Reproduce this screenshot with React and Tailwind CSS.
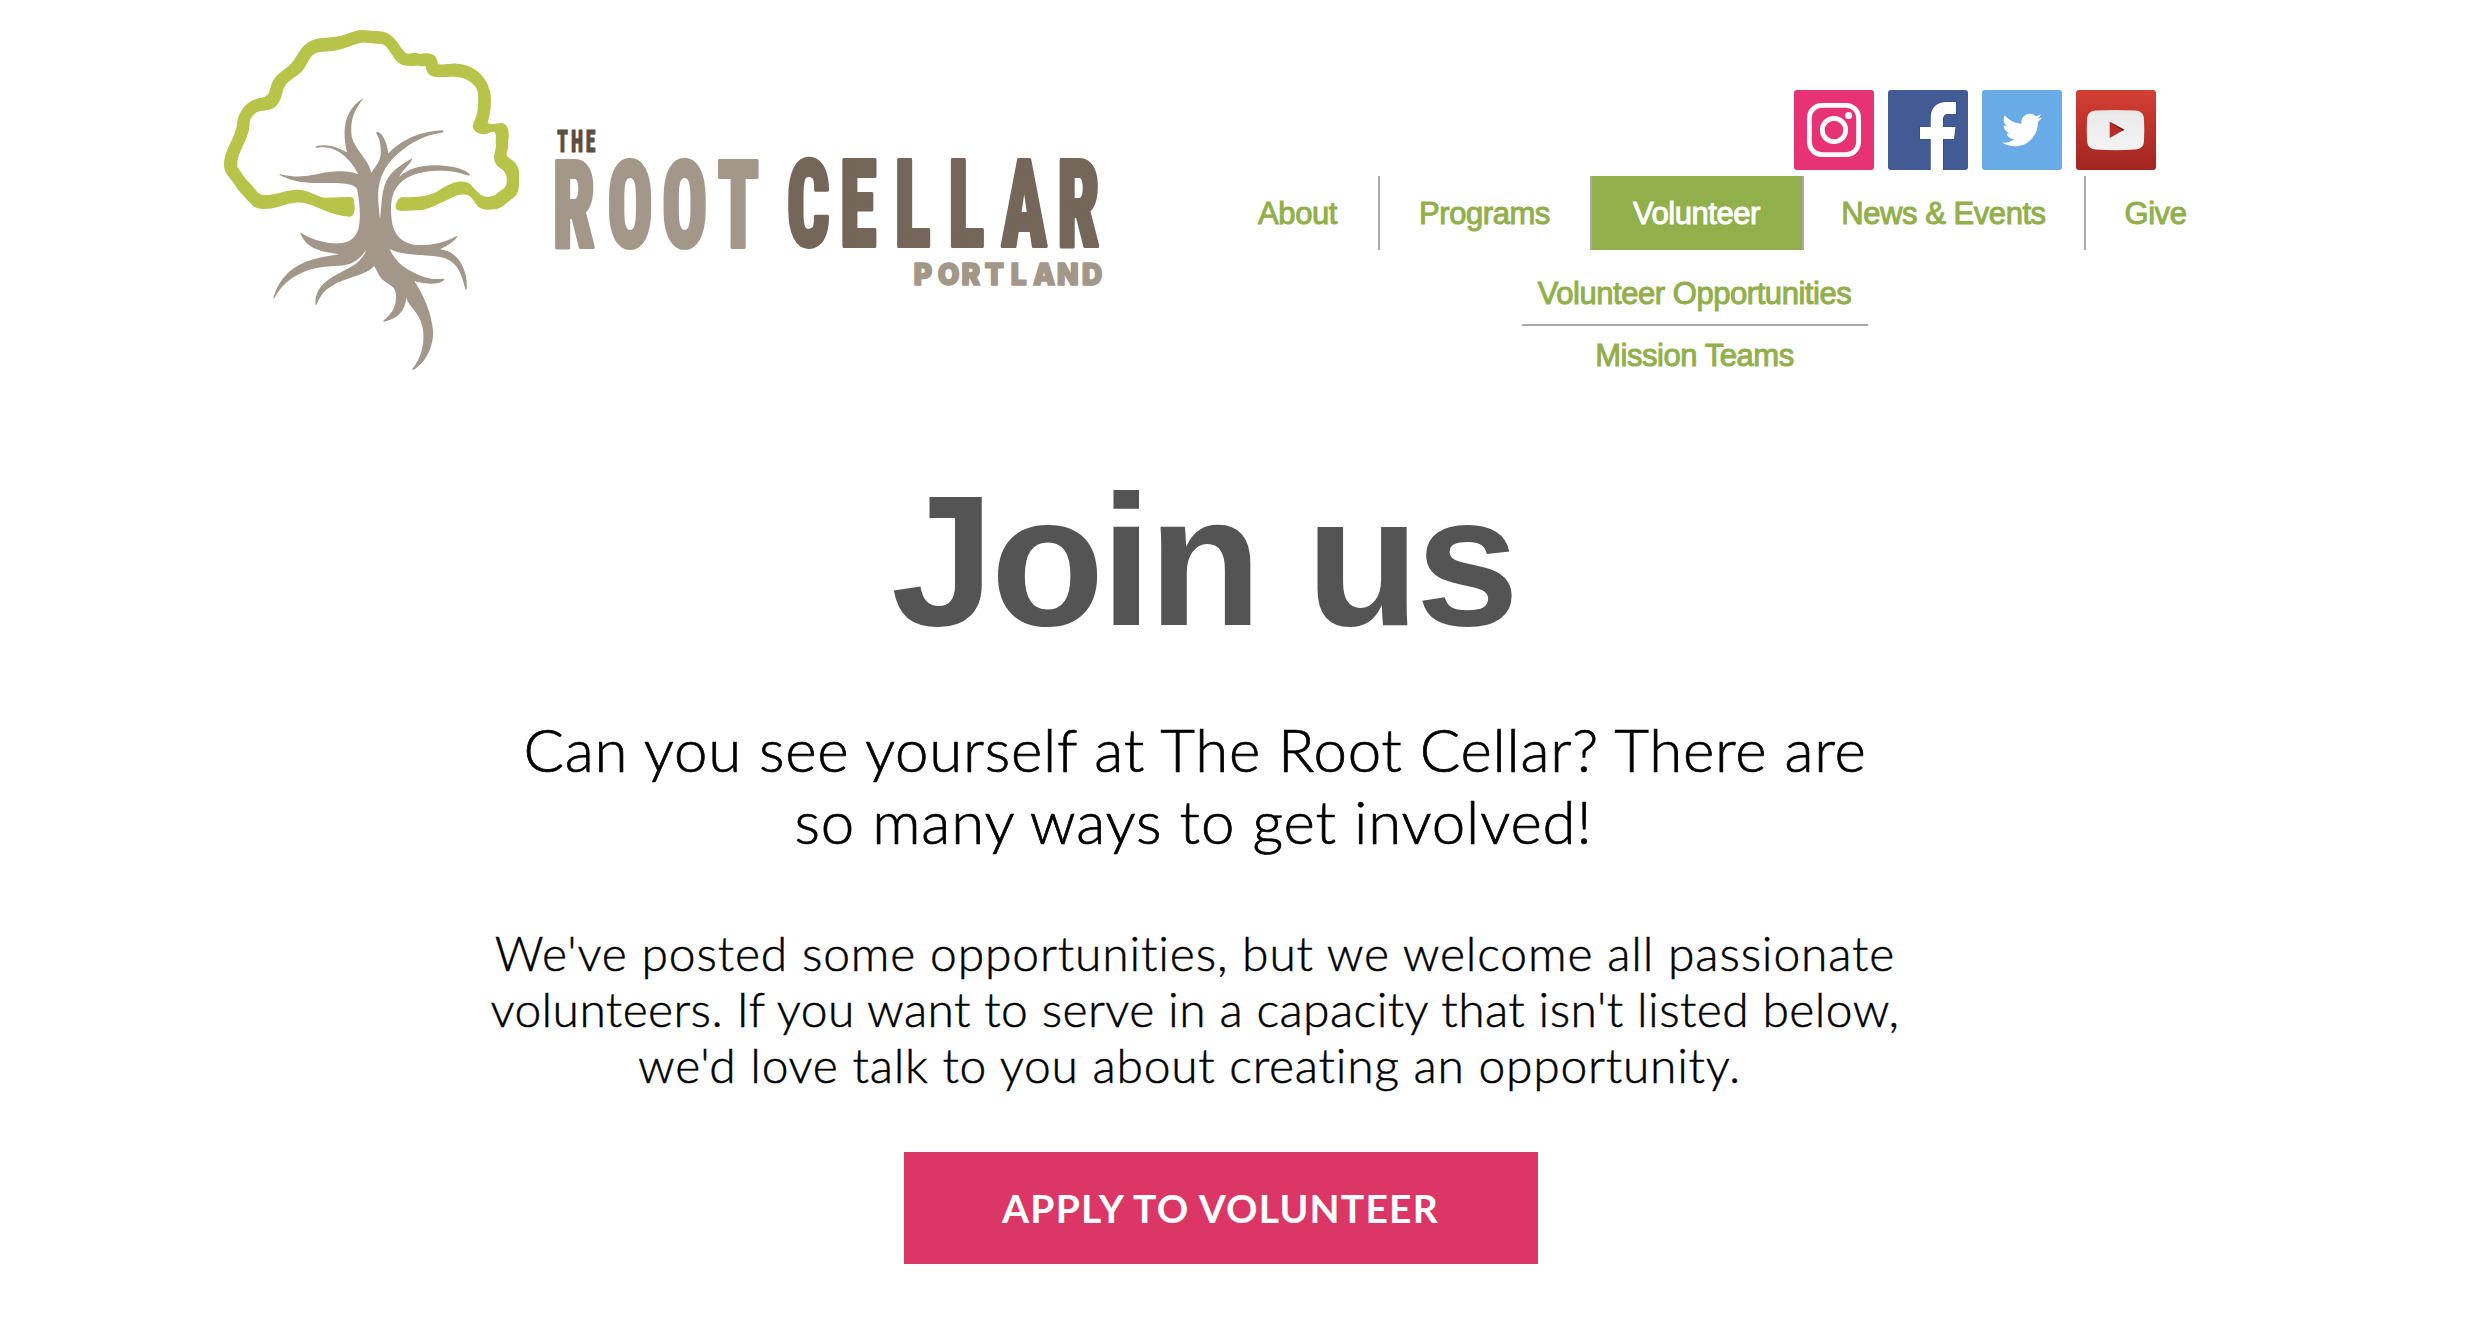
import { FaTwitter } from "react-icons/fa";

function Logo() {
  return (
    <svg
      width="900"
      height="360"
      viewBox="0 0 900 360"
      className="shrink-0"
      role="img"
      aria-label="The Root Cellar Portland"
    >
      <g transform="scale(0.33333)">
        <path
          fill="#b7c349"
          d="M418 590C385 588 350 575 320 562C300 552 275 546 255 548C225 550 200 567 160 567C140 567 130 560 122 550C100 528 85 512 75 495C60 472 42 460 42 435C42 400 60 375 73 343C85 315 78 300 90 280C103 255 120 240 150 234C165 231 173 227 178 215C183 200 185 182 200 167C215 152 235 142 248 125C262 107 273 80 293 68C320 50 350 56 390 48C415 42 430 32 455 30C470 30 480 33 495 33C530 32 545 45 562 67C572 80 580 97 592 101C605 102 610 97 622 100C632 104 640 99 652 100C675 101 682 115 684 133C705 135 720 130 740 131C790 134 830 165 841 218C846 255 840 280 833 309C848 315 862 309 876 309C892 312 897 330 896 348C896 365 893 368 894 382C894 395 888 400 890 406C895 415 910 420 918 432C928 445 928 455 927 475C927 495 927 510 921 522C912 535 900 540 885 553C872 567 855 569 835 569C815 569 805 562 797 551C787 535 780 525 768 524C740 520 725 535 700 545C670 558 650 571 620 571L575 573C560 573 555 565 557 555C562 540 568 532 578 531C605 533 640 530 665 522C690 512 715 488 745 485C765 483 780 488 788 500C800 512 810 529 830 530C850 532 855 525 865 517C880 507 890 500 890 485C892 470 887 455 875 447C863 440 852 430 852 410C854 395 858 390 858 375C855 360 862 345 853 336C843 333 835 343 820 343C805 341 788 333 788 318C792 305 800 290 803 270C805 240 808 215 795 199C780 180 760 171 730 170C710 170 700 172 678 171C660 170 648 158 647 138C635 141 625 135 618 137C605 139 590 138 578 135C560 128 550 110 540 95C530 80 525 71 505 71C490 72 470 67 455 68C430 72 410 84 385 90C360 95 340 93 318 99C300 107 295 125 283 145C270 165 245 175 228 193C215 210 218 235 202 254C185 275 160 268 142 276C130 282 120 295 119 310C118 335 112 348 103 368C93 392 80 410 82 440C95 460 105 475 120 490C135 505 142 523 160 525C195 527 225 510 262 509C290 508 320 528 342 533L420 531C432 531 432 540 432 548C436 560 436 590 418 590Z"
        />
        <path
          fill="#a3978a"
          d="M461 233C430 275 420 300 425 350C435 390 475 415 484 459C500 432 515 425 512 385C512 365 505 350 498 338C505 333 512 340 518 348C528 363 532 380 535 400C575 360 625 335 698 331C702 334 700 337 695 338C640 345 600 370 565 400C530 430 500 475 505 545C507 570 508 585 510 597C515 560 513 520 528 485C545 450 575 435 606 415C608 418 600 430 590 440C580 452 572 460 567 471C600 440 650 432 700 437C735 440 765 448 780 463C779 468 775 467 765 464C735 452 680 449 640 457C600 465 570 480 552 515C540 545 542 580 546 605C552 650 585 672 620 675C670 677 700 668 742 647C745 655 715 677 690 688C740 692 775 745 770 808C767 809 766 808 765 804C755 760 740 720 690 711C650 703 580 708 539 687C560 735 600 755 640 770C660 778 680 778 703 776C705 780 695 787 680 790C660 793 640 790 613 783C640 825 665 875 670 940C668 985 645 1030 612 1049C607 1050 606 1049 608 1046C635 1010 642 975 640 940C638 900 620 880 600 855C595 848 590 840 589 832C585 875 565 895 522 905C518 905 519 903 523 899C545 880 558 862 558 830C558 800 545 800 530 788C508 775 505 760 493 738C470 765 410 772 370 795C340 812 330 830 319 855C316 855 315 852 316 848C318 800 350 780 390 758C430 738 455 725 469 690C450 715 430 735 390 737C340 740 300 740 250 772C215 797 205 815 193 835C190 836 189 834 191 830C210 770 250 735 310 718C340 709 365 707 387 703C340 695 290 690 271 639C274 636 276 640 280 643C310 660 350 672 390 670C430 667 448 640 449 600C451 570 447 540 442 510C435 485 375 490 310 489C270 488 240 480 208 465C208 461 212 462 216 464C270 475 300 467 350 457C390 452 415 452 444 462C430 430 390 382 340 382C330 381 322 385 317 383C317 378 330 376 345 376C370 377 390 387 411 397C395 330 402 270 461 233Z"
        />
      </g>
      <g className="font-['Roboto_Condensed',sans-serif] font-black" strokeLinejoin="round">
        <text
          transform="translate(0 131.5) scale(0.64 1)"
          x="542 564 587"
          fontSize="31"
          fill="#5d4e42"
          stroke="#5d4e42"
          strokeWidth="0.8"
        >
          THE
        </text>
        <text
          transform="translate(0 226.8) scale(0.62 1)"
          x="552.7 641 729 818.5"
          fontSize="121"
          fill="#a3978a"
          stroke="#a3978a"
          strokeWidth="4"
        >
          ROOT
        </text>
        <text
          transform="translate(0 226.2) scale(0.62 1)"
          x="930.4 1016.2 1104.5 1191 1276.8 1366.5"
          fontSize="121"
          fill="#746659"
          stroke="#746659"
          strokeWidth="4"
        >
          CELLAR
        </text>
      </g>
      <text
        transform="translate(0 265.2) scale(0.95 1)"
        x="740.8 766 791.1 815.6 842.9 866.2 891.5 917.8"
        fontSize="29.500"
        fill="#a3978a"
        stroke="#a3978a"
        strokeWidth="1.6"
        strokeLinejoin="round"
        className="font-['Inter',sans-serif] font-black"
      >
        PORTLAND
      </text>
    </svg>
  );
}

function Instagram() {
  return (
    <svg viewBox="0 0 80 80" className="size-20 rounded-[3px] bg-[#e73375]" aria-label="Instagram">
      <rect x="15.4" y="15.4" width="49.2" height="49.2" rx="12.5" fill="none" stroke="#fff" strokeWidth="4.8" />
      <circle cx="40" cy="40" r="11.7" fill="none" stroke="#fff" strokeWidth="4.8" />
      <circle cx="54.6" cy="25.6" r="3.5" fill="#fff" />
    </svg>
  );
}

function Facebook() {
  return (
    <svg viewBox="0 0 80 80" className="size-20 rounded-[3px] bg-[#435b95]" aria-label="Facebook">
      <path
        d="M42.7 80V49H32V37h10.7V27C42.7 17.500 49 12 58.500 12H68v12h-7c-4.500 0-6 2-6 5.500V37h12.500L66 49H55v31z"
        fill="#fff"
        stroke="#2c478a"
        strokeWidth="1.200"
        paintOrder="stroke"
      />
    </svg>
  );
}

function Twitter() {
  return (
    <div className="flex size-20 items-center justify-center rounded-[3px] bg-[#69abe7]">
      <FaTwitter className="size-10 text-white" aria-label="Twitter" />
    </div>
  );
}

function YouTube() {
  return (
    <svg viewBox="0 0 80 80" className="size-20 rounded-[3px] bg-linear-to-b from-[#d43f33] to-[#a22421]" aria-label="YouTube">
      <defs>
        <linearGradient id="screen" x1="0" y1="0" x2="0" y2="1">
          <stop offset="0" stopColor="#e4e4e4" />
          <stop offset="0.150" stopColor="#ebebeb" />
          <stop offset="1" stopColor="#f3f3f3" />
        </linearGradient>
      </defs>
      <path
        d="M20 20.500Q39.500 19.500 59 20.500C65.500 21 68 24 68 30Q68.600 40 68 50C68 56 65.500 59 59 59.500Q39.500 61 20 59.500C13.500 59 11.300 56 11 50Q10.500 40 11 30C11.300 24 13.500 21 20 20.500Z"
        fill="url(#screen)"
      />
      <path d="M33.700 31.700L48.300 39.700L33.700 48Z" fill="#b92c27" />
      <path d="M33.700 31.700L48.300 39.700L46.500 40.700Z" fill="#6e1a17" />
    </svg>
  );
}

const navItem =
  "flex items-center justify-center pr-[1px] text-[31px] tracking-[-0.45px] [-webkit-text-stroke:1px_currentColor]";

function Nav() {
  return (
    <div className="ml-[108px] flex flex-col pt-[70px]">
      <div className="flex gap-[14px] pl-[576px]">
        <Instagram />
        <Facebook />
        <Twitter />
        <YouTube />
      </div>
      <nav className="mt-[6px] flex h-[74px] font-['Liberation_Sans',Arial,sans-serif] text-[#91af4b]">
        <a className={`${navItem} w-[162px] border-r-2 border-[#a9a9a9] pt-[3px]`}>About</a>
        <a className={`${navItem} w-[212px] border-r-2 border-[#a9a9a9] pt-[3px]`}>Programs</a>
        <a className={`${navItem} w-[212px] border-r-2 border-[#a9a9a9] bg-[#91af4b] pt-[3px] text-white`}>Volunteer</a>
        <a className={`${navItem} w-[282px] border-r-2 border-[#a9a9a9] pt-[3px]`}>News &amp; Events</a>
        <a className={`${navItem} w-[140px] pt-[3px]`}>Give</a>
      </nav>
      <div className="ml-[304px] flex w-[346px] flex-col font-['Liberation_Sans',Arial,sans-serif] text-[#91af4b]">
        <div className="flex h-[76px] flex-col justify-end border-b-2 border-[#a9a9a9] pb-[7px]">
          <a className={navItem}>Volunteer Opportunities</a>
        </div>
        <a className={`${navItem} h-[60px] pt-px`}>Mission Teams</a>
      </div>
    </div>
  );
}

export default function App() {
  return (
    <div className="h-[1342px] w-[2478px] overflow-hidden bg-white">
      <header className="flex h-[400px] items-start pt-5 pl-[210px]">
        <Logo />
        <Nav />
      </header>
      <main className="flex flex-col">
        <h1 className="mt-[69px] h-[210px] pl-[891px] font-['Liberation_Sans',Arial,sans-serif] text-[186px] leading-[184px] font-bold tracking-[-3.8px] text-[#545454]">
          Join us
        </h1>
        <div className="ml-[395px] w-[1600px] text-center font-['Lato',sans-serif] font-light text-black">
          <h2 className="mt-[34px] text-[60px] leading-[72px] [-webkit-text-stroke:0.7px_currentColor]">
            <div className="tracking-[0.76px]">Can you see yourself at The Root Cellar? There are</div>
            <div className="pr-[3px] tracking-[0.85px]">so many ways to get involved!</div>
          </h2>
          <div className="mt-[68px] text-[48px] leading-[56px] [-webkit-text-stroke:0.5px_currentColor]">
            <p className="tracking-[0.84px]">We've posted some opportunities, but we welcome all passionate</p>
            <p className="tracking-[0.4px]">volunteers. If you want to serve in a capacity that isn't listed below,</p>
            <p className="pr-[11px] tracking-[0.76px]">we'd love talk to you about creating an opportunity.</p>
          </div>
        </div>
        <button className="mt-[59px] ml-[904px] h-[112px] w-[634px] bg-[#db3666] pr-[1px] font-['Lato',sans-serif] text-[39px] font-bold tracking-[1.2px] text-white">
          APPLY TO VOLUNTEER
        </button>
      </main>
    </div>
  );
}
